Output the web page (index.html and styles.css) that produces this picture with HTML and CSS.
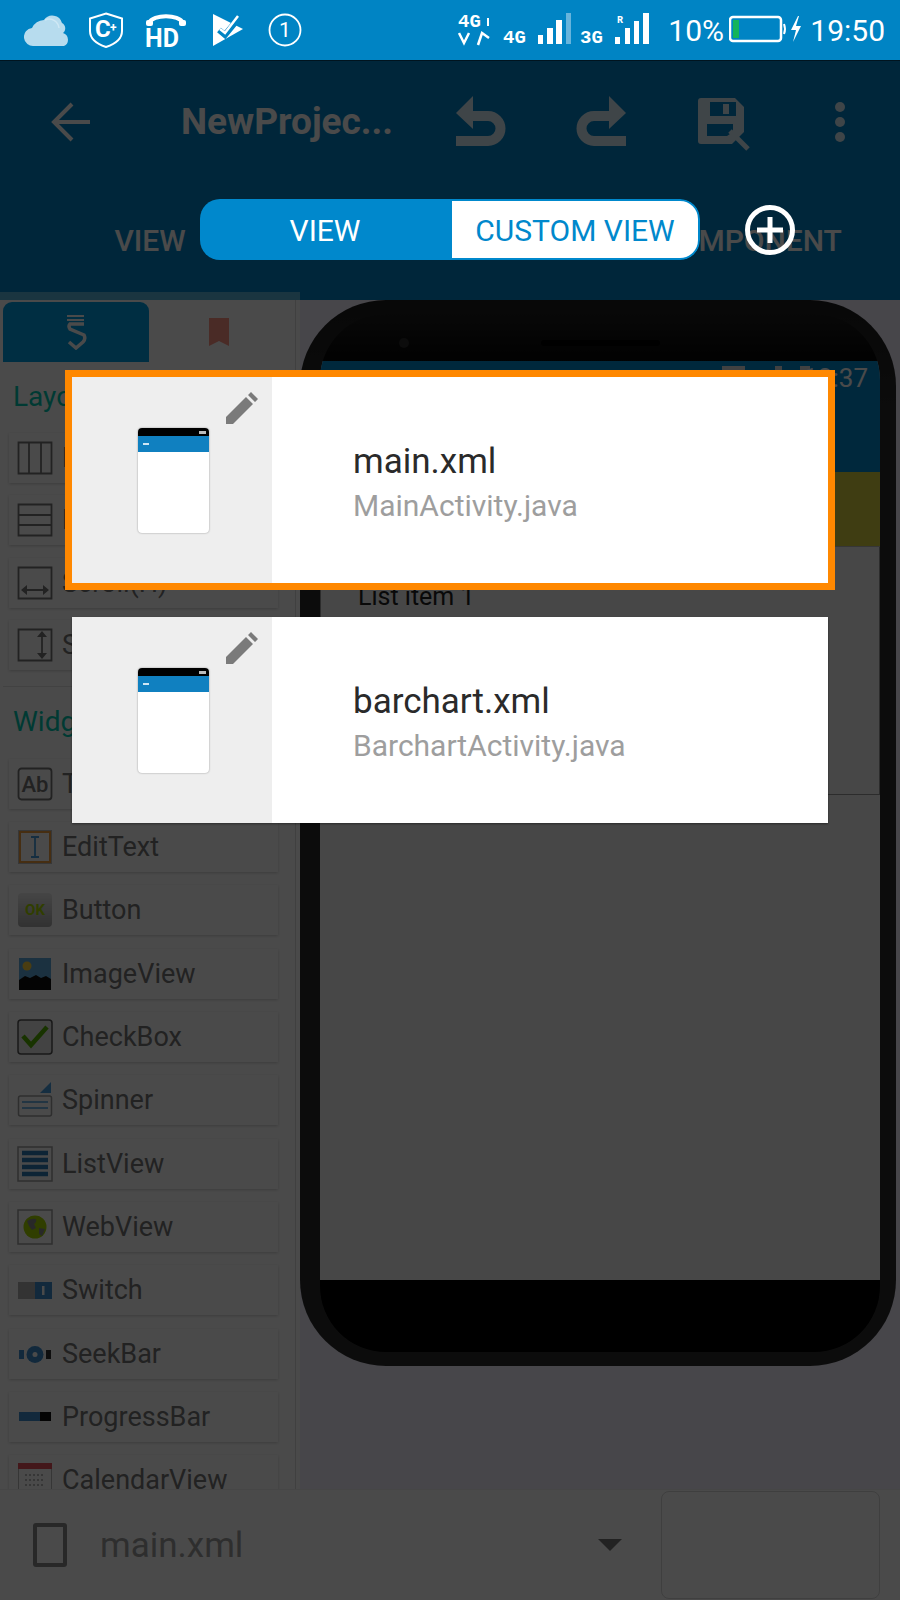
FILE: index.html
```html
<!DOCTYPE html>
<html lang="en">
<head>
  <meta charset="UTF-8">
  <title>NewProject</title>
  <meta name="viewport" content="width=device-width, initial-scale=1">
  <link rel="stylesheet" href="styles.css">
</head>
<body>
  <div class="statusbar">
    <svg class="st-cloud" width="44" height="38" viewBox="0 0 44 38"><path d="M10 36a9 9 0 0 1-2-18 14 14 0 0 1 12-8 10 10 0 0 1 18 3 6 6 0 0 1 1 10 7 7 0 0 1 1 13z" fill="#b7dcee"/><path d="M21 10a10 10 0 0 1 14 8" fill="none" stroke="#cfe8f4" stroke-width="1.5"/></svg>
    <svg class="st-shield" width="36" height="36" viewBox="0 0 36 36"><path d="M18 1.500 34 6.500V19C34 27 27 32 18 35 9 32 2 27 2 19V6.500z" fill="none" stroke="#fff" stroke-width="2"/><text x="7" y="24.500" class="st-c">C</text><text x="22" y="20" class="st-plus">+</text></svg>
    <svg class="st-hd" width="42" height="46" viewBox="0 -4 42 46"><path d="M4 12C8 3 34 3 38 12" fill="none" stroke="#fff" stroke-width="4"/><rect x="1" y="9" width="7" height="6" rx="2" fill="#fff"/><rect x="34" y="9" width="7" height="6" rx="2" fill="#fff"/><text x="0" y="36" class="st-hd-text">HD</text></svg>
    <svg class="st-flag" width="32" height="34" viewBox="0 0 32 34"><path d="M1 1 31 16 1 33z" fill="#fff"/><path d="M7 17l6 5 13-16" fill="none" stroke="#0084c4" stroke-width="6"/><path d="M8 16l5 4 13-17" fill="none" stroke="#fff" stroke-width="2.500"/></svg>
    <svg class="st-one" width="34" height="34" viewBox="0 0 34 34"><circle cx="17" cy="17" r="15.500" fill="none" stroke="#fff" stroke-width="1.800"/><text x="17" y="24" class="st-one-text">1</text></svg>

    <div class="st-right">
      <svg class="st-net" width="192" height="60" viewBox="458 0 192 60">
        <text x="458" y="27" class="net-big">4G</text>
        <rect x="487" y="18" width="2" height="8" fill="#fff"/>
        <path d="M459 33l5 10 5-10M478 45l4-12 7 5" fill="none" stroke="#fff" stroke-width="2.500"/>
        <text x="503" y="43" class="net-big">4G</text>
        <rect x="538" y="35" width="5" height="9" fill="#fff"/>
        <rect x="547" y="28" width="6" height="16" fill="#fff"/>
        <rect x="556" y="20" width="6" height="24" fill="#fff"/>
        <rect x="566" y="13" width="5" height="31" fill="#67b4dc"/>
        <text x="580" y="43" class="net-big">3G</text>
        <text x="617" y="23" class="net-small">R</text>
        <rect x="615" y="37" width="5" height="7" fill="#fff"/>
        <rect x="625" y="28" width="5" height="16" fill="#fff"/>
        <rect x="634" y="21" width="5" height="23" fill="#fff"/>
        <rect x="643" y="13" width="6" height="31" fill="#fff"/>
      </svg>
      <span class="st-pct">10%</span>
      <svg class="st-batt" width="74" height="30" viewBox="0 0 74 30"><rect x="1" y="2" width="51" height="24" rx="3" fill="none" stroke="#fff" stroke-width="2.500"/><rect x="4" y="5" width="6" height="18" fill="#14b45a"/><path d="M55 9q2 5 0 10" fill="none" stroke="#fff" stroke-width="2"/><path d="M69 1 62 15h5l-3 12 8-16h-5l3-10z" fill="#fff"/></svg>
      <span class="st-time">19:50</span>
    </div>
  </div>

  <div class="app">
    <header class="toolbar">
      <svg class="tb-back" width="42" height="42" viewBox="0 0 42 42"><path d="M40 21H4M22 3 4 21l18 18" fill="none" stroke="#fff" stroke-width="4"/></svg>
      <div class="tb-title">NewProjec...</div>
      <svg class="tb-undo tb-soft" width="50" height="50" viewBox="0 0 50 50"><path d="M0 45h32a12 12 0 0 0 0-25H10" fill="none" stroke="#fff" stroke-width="10"/><path d="M17 0 0 17l17 16z" fill="#fff"/></svg>
      <svg class="tb-redo tb-soft" width="50" height="50" viewBox="0 0 50 50"><path d="M50 45H18a12 12 0 0 1 0-25h22" fill="none" stroke="#fff" stroke-width="10"/><path d="M33 0l17 17-17 16z" fill="#fff"/></svg>
      <svg class="tb-save tb-soft" width="54" height="54" viewBox="0 0 54 54"><path d="M3 0h34l9 9v25l-6 6-6 6H3a3 3 0 0 1-3-3V3a3 3 0 0 1 3-3z" fill="#fff"/><rect x="12" y="4" width="26" height="14" class="save-slot"/><rect x="25" y="6" width="6" height="10" fill="#fff"/><path d="M9 26h26v8l-6 4H9z" class="save-slot"/><path d="M32 33l18 18" stroke="#fff" stroke-width="5"/></svg>
      <svg class="tb-more tb-soft" width="12" height="42" viewBox="0 0 12 42"><circle cx="6" cy="6" r="5" fill="#fff"/><circle cx="6" cy="21" r="5" fill="#fff"/><circle cx="6" cy="36" r="5" fill="#fff"/></svg>
    </header>

    <nav class="tabs">
      <div class="tab">VIEW</div>
      <div class="tab"></div>
      <div class="tab">COMPONENT</div>
      <div class="tab-indicator"></div>
    </nav>

    <main class="workspace">
      <aside class="palette">
        <div class="palette-tabs">
          <div class="ptab ptab-on">
            <svg width="24" height="36" viewBox="0 0 24 36"><path d="M3 2h17M3 6h17" stroke="#fff" stroke-width="2"/><path d="M20 10H6q-2 2 0 5l14 6q2 4-1 7l-7 6-7-6M5 28" fill="none" stroke="#fff" stroke-width="3.500"/></svg>
          </div>
          <div class="ptab ptab-marks">
            <svg width="20" height="28" viewBox="0 0 20 28"><path d="M0 0h20v28l-10-5-10 5z" fill="#ff9384"/></svg>
          </div>
        </div>

        <h3 class="group-title">Layout</h3>
        <div class="row row-tight">
          <svg class="ic" viewBox="0 0 36 36"><path d="M1.500 2.500h33v31h-33zM12 2.500v31M24 2.500v31" fill="none" stroke="#757575" stroke-width="1.800"/></svg>
          <span>LinearLayout(H)</span>
        </div>
        <div class="row row-tight">
          <svg class="ic" viewBox="0 0 36 36"><path d="M1.500 2.500h33v31h-33zM1.500 13h33M1.500 23h33" fill="none" stroke="#757575" stroke-width="1.800"/></svg>
          <span>LinearLayout(V)</span>
        </div>
        <div class="row row-tight">
          <svg class="ic" viewBox="0 0 36 36"><path d="M1.500 2.500h33v31h-33zM6 25h24" fill="none" stroke="#757575" stroke-width="1.800"/><path d="M10 20 4 25l6 5zM26 20l6 5-6 5z" fill="#757575"/></svg>
          <span>Scroll(H)</span>
        </div>
        <div class="row row-tight">
          <svg class="ic" viewBox="0 0 36 36"><path d="M1.500 2.500h33v31h-33zM25 7v22" fill="none" stroke="#757575" stroke-width="1.800"/><path d="M20 10l5-6 5 6zM20 26l5 6 5-6z" fill="#757575"/></svg>
          <span>Scroll(V)</span>
        </div>

        <div class="group-line"></div>
        <h3 class="group-title group-title-widgets">Widgets</h3>
        <div class="row">
          <svg class="ic" viewBox="0 0 36 36"><rect x="1.500" y="2.500" width="33" height="31" rx="3" fill="none" stroke="#757575" stroke-width="1.800"/><text x="18" y="26" class="ic-ab">Ab</text></svg>
          <span>TextView</span>
        </div>
        <div class="row">
          <svg class="ic" viewBox="0 0 36 36"><rect x="1" y="1" width="34" height="34" fill="#bdbdbd"/><rect x="3" y="3" width="30" height="30" fill="#fff" stroke="#f0a040" stroke-width="2"/><path d="M14 8h8M14 28h8M18 8v20" fill="none" stroke="#4a9fe0" stroke-width="1.800"/></svg>
          <span>EditText</span>
        </div>
        <div class="row">
          <svg class="ic" viewBox="0 0 36 36"><defs><linearGradient id="btn" x1="0" y1="0" x2="0" y2="1"><stop offset="0" stop-color="#eee"/><stop offset="1" stop-color="#aaa"/></linearGradient></defs><rect x="1" y="1" width="34" height="34" rx="4" fill="url(#btn)"/><text x="18" y="23" class="ic-ok">OK</text></svg>
          <span>Button</span>
        </div>
        <div class="row">
          <svg class="ic" viewBox="0 0 36 36"><rect x="2" y="2" width="32" height="32" fill="#5eaadd"/><circle cx="10" cy="10" r="4.500" fill="#ffd23c"/><path d="M2 24l6-4 5 2 6-3 5 3 5-2 5 3v11H2z" fill="#111"/></svg>
          <span>ImageView</span>
        </div>
        <div class="row">
          <svg class="ic" viewBox="0 0 36 36"><rect x="1" y="1" width="34" height="34" rx="3" fill="#e6e6e6" stroke="#555" stroke-width="1.500"/><path d="M6 17l8 9L30 8" fill="none" stroke="#55b000" stroke-width="4.500"/></svg>
          <span>CheckBox</span>
        </div>
        <div class="row">
          <svg class="ic" viewBox="0 0 36 36"><path d="M34 0v11H23z" fill="#4a9fe0"/><rect x="1.500" y="14" width="33" height="20" rx="2" fill="#fff" stroke="#9e9e9e" stroke-width="1.500"/><path d="M5 20h26M5 26h26" stroke="#4a9fe0" stroke-width="1.500"/></svg>
          <span>Spinner</span>
        </div>
        <div class="row">
          <svg class="ic" viewBox="0 0 36 36"><rect x="1" y="1" width="34" height="34" fill="#fff" stroke="#9e9e9e" stroke-width="1.500"/><path d="M5 7h26M5 14h26M5 21h26M5 28h26" stroke="#2e7cb8" stroke-width="4.500"/></svg>
          <span>ListView</span>
        </div>
        <div class="row">
          <svg class="ic" viewBox="0 0 36 36"><rect x="1" y="1" width="34" height="34" fill="#fff" stroke="#9e9e9e" stroke-width="1.500"/><circle cx="18" cy="18" r="11.500" fill="#a4d400"/><path d="M10 12q5-3 9-2 1 3-2 5l2 4-4 2-3-4zM22 19l6 1-3 7-3-2z" fill="#8a8a8a"/></svg>
          <span>WebView</span>
        </div>
        <div class="row">
          <svg class="ic" viewBox="0 0 36 36"><rect x="1" y="10" width="18" height="17" fill="#b0b0b0"/><rect x="18" y="10" width="17" height="17" fill="#3e8fd0"/><rect x="25" y="14" width="2.500" height="9" fill="#fff"/></svg>
          <span>Switch</span>
        </div>
        <div class="row">
          <svg class="ic" viewBox="0 0 36 36"><rect x="2" y="14" width="5" height="9" fill="#3e8fd0"/><rect x="29" y="14" width="5" height="9" fill="#333"/><circle cx="18" cy="18.500" r="8.500" fill="#3e8fd0"/><circle cx="18" cy="18.500" r="2.500" fill="#fff"/></svg>
          <span>SeekBar</span>
        </div>
        <div class="row">
          <svg class="ic" viewBox="0 0 36 36"><rect x="2" y="13" width="21" height="9" fill="#3e8fd0"/><rect x="23" y="13" width="11" height="9" fill="#111"/></svg>
          <span>ProgressBar</span>
        </div>
        <div class="row">
          <svg class="ic" viewBox="0 0 36 36"><rect x="1.500" y="1.500" width="33" height="33" fill="#fff" stroke="#bbb"/><rect x="1" y="1" width="34" height="6" fill="#e8505a"/><path d="M8 13h20M8 18h20M8 23h20M8 28h20" stroke="#bbb" stroke-width="2" stroke-dasharray="2 2"/></svg>
          <span>CalendarView</span>
        </div>
      </aside>

      <section class="canvas">
        <div class="phone">
          <div class="phone-face">
            <div class="phone-top">
              <span class="camera"></span>
              <span class="earpiece"></span>
            </div>
            <div class="screen">
              <div class="scr-header">
                <div class="scr-status">
                  <span class="scr-ic scr-ic-wide"></span>
                  <span class="scr-ic"></span>
                  <span class="scr-ic scr-ic-mid"></span>
                  <span class="scr-time">12:37</span>
                </div>
              </div>
              <div class="scr-band"></div>
              <div class="scr-list">List item 1</div>
            </div>
          </div>
        </div>
      </section>
    </main>

    <footer class="bottombar">
      <span class="device-ic"></span>
      <span class="file-name">main.xml</span>
      <span class="file-arrow"></span>
      <div class="run-box"></div>
    </footer>
  </div>

  <div class="scrim"></div>

  <div class="segmented">
    <div class="seg seg-on">VIEW</div>
    <div class="seg seg-off">CUSTOM VIEW</div>
  </div>
  <svg class="add-btn" width="50" height="50" viewBox="0 0 50 50"><circle cx="25" cy="25" r="22.500" fill="none" stroke="#fff" stroke-width="5"/><path d="M25 12v26M12 25h26" stroke="#fff" stroke-width="5"/></svg>

  <div class="file-dialog">
    <div class="file-card file-card-on">
      <div class="thumb">
        <svg class="pencil" width="32" height="32" viewBox="0 0 32 32"><path d="M0 32v-7L20 5l7 7L7 32zM22 3l3-3 7 7-3 3z" fill="#7a7a7a"/></svg>
        <div class="mini"><div class="mini-status"><i></i></div><div class="mini-head"><i></i></div></div>
      </div>
      <div class="file-text">
        <div class="file-title">main.xml</div>
        <div class="file-sub">MainActivity.java</div>
      </div>
    </div>
    <div class="file-card">
      <div class="thumb">
        <svg class="pencil" width="32" height="32" viewBox="0 0 32 32"><path d="M0 32v-7L20 5l7 7L7 32zM22 3l3-3 7 7-3 3z" fill="#7a7a7a"/></svg>
        <div class="mini"><div class="mini-status"><i></i></div><div class="mini-head"><i></i></div></div>
      </div>
      <div class="file-text">
        <div class="file-title">barchart.xml</div>
        <div class="file-sub">BarchartActivity.java</div>
      </div>
    </div>
  </div>
</body>
</html>
```

FILE: styles.css
```css
* {
  box-sizing: border-box;
}
body {
  margin: 0;
  width: 900px;
  height: 1600px;
  overflow: hidden;
  position: relative;
  font-family: Roboto, 'Liberation Sans', sans-serif;
  background: #fff;
}
svg {
  display: block;
  flex: none;
}

/* status bar stays above the scrim */
.statusbar {
  position: relative;
  z-index: 3;
  height: 61px;
  background: #0084c4;
  border-bottom: 1px solid #00141f;
  display: flex;
  align-items: center;
  padding-left: 24px;
  color: #fff;
}
.st-cloud { margin-right: 20px; margin-top: -2px; }
.st-shield { margin-right: 21px; }
.st-hd { margin-right: 25px; }
.st-flag { margin-right: 24px; }
.st-c { font: 700 24px Roboto, sans-serif; fill: #fff; }
.st-plus { font: 700 12px Roboto, sans-serif; fill: #fff; }
.st-hd-text { font: 700 25px Roboto, sans-serif; fill: #fff; }
.st-one-text { font: 400 21px Roboto, sans-serif; fill: #fff; text-anchor: middle; }
.st-right {
  margin-left: auto;
  display: flex;
  align-items: center;
  padding-right: 15px;
}
.st-net { margin-right: 18px; }
.net-big { font: 700 19px 'Liberation Mono', monospace; fill: #fff; }
.net-small { font: 700 10px 'Liberation Mono', monospace; fill: #fff; }
.st-pct { font-size: 30px; width: 61px; }
.st-time { font-size: 30px; margin-left: 7px; }

/* toolbar and tabs */
.toolbar {
  height: 131px;
  padding-bottom: 10px;
  background: #0084c8;
  display: flex;
  align-items: center;
  color: #fff;
}
.tb-back { margin-left: 50px; }
.tb-title {
  margin-left: 89px;
  width: 274px;
  font-size: 37px;
  font-weight: 700;
}
.tb-soft { opacity: .85; }
.tb-undo { margin-left: 1px; margin-top: -1px; }
.tb-redo { margin-left: 70px; margin-top: -1px; }
.tb-save { margin-left: 72px; margin-top: 7px; }
.tb-more { margin-left: 82px; }
.save-slot { fill: #0084c8; }
.tabs {
  position: relative;
  height: 108px;
  background: #0084c8;
  display: grid;
  grid-template-columns: 300px 300px 300px;
  color: #fff;
  font-size: 30px;
  font-weight: 500;
  text-align: center;
  padding-top: 31px;
}
.tab-indicator {
  position: absolute;
  left: 0;
  bottom: 0;
  width: 300px;
  height: 8px;
  background: #5ab7dc;
}

/* palette on the left */
.workspace {
  display: flex;
  height: 1189px;
  background: #fff;
}
.palette {
  width: 296px;
  border-right: 1px solid #dcdcdc;
  overflow: hidden;
  flex: none;
  margin-right: 4px;
}
.palette-tabs {
  display: flex;
  padding: 2px 0 0 3px;
  gap: 2px;
}
.ptab {
  width: 146px;
  height: 60px;
  display: flex;
  align-items: center;
  justify-content: center;
  border-radius: 9px 9px 0 0;
}
.ptab-on {
  background: #00a0e4;
}
.ptab-marks {
  width: 136px;
}
.group-title {
  margin: 15px 0 16px 13px;
  height: 40px;
  line-height: 40px;
  font-size: 28px;
  font-weight: 400;
  color: #00c8b0;
}
.group-title-widgets {
  margin-bottom: 17px;
}
.group-line {
  height: 1px;
  background: #e4e4e4;
  margin: 16px 0 0 3px;
}
.row {
  margin: 0 17px 13.3px 9px;
  height: 50px;
  background: #fff;
  box-shadow: 0 1px 3px rgba(0,0,0,.2);
  display: flex;
  align-items: center;
  padding-left: 8px;
  gap: 9px;
  font-size: 27px;
  color: #757575;
  white-space: nowrap;
}
.row-tight {
  margin-bottom: 12.3px;
}
.ic {
  width: 36px;
  height: 36px;
}
.ic-ab { font: 500 22px Roboto, sans-serif; fill: #757575; text-anchor: middle; }
.ic-ok { font: 700 15px Roboto, sans-serif; fill: #a4d400; text-anchor: middle; }

/* phone preview */
.canvas {
  flex: 1;
  background: #f3f0ff;
}
.phone {
  width: 596px;
  height: 1066px;
  padding: 14px 16px 14px 20px;
  background: linear-gradient(#1c1c1c, #2c2c2c 12%);
  border-radius: 86px;
}
.phone-face {
  height: 100%;
  background: linear-gradient(#1c1c1c, #000 60px);
  border-radius: 66px;
  overflow: hidden;
}
.phone-top {
  height: 47px;
  position: relative;
}
.camera {
  position: absolute;
  left: 79px;
  top: 24px;
  width: 10px;
  height: 10px;
  border-radius: 50%;
  background: #2a2a2a;
}
.earpiece {
  position: absolute;
  left: 221px;
  top: 26px;
  width: 119px;
  height: 6px;
  border-radius: 3px;
  background: #000;
}
.screen {
  height: 919px;
  background: #f4f4f4;
}
.scr-header {
  height: 111px;
  background: #008bd0;
}
.scr-status {
  display: flex;
  justify-content: flex-end;
  align-items: center;
  height: 34px;
  padding-right: 12px;
  color: #fff;
  font-size: 26px;
}
.scr-ic {
  align-self: flex-start;
  margin-top: 5px;
  width: 7px;
  height: 14px;
  margin-right: 18px;
  background: #e0e0e0;
}
.scr-ic-wide { width: 23px; margin-right: 30px; }
.scr-ic-mid { width: 10px; margin-right: -7px; }
.scr-band {
  height: 75px;
  background: #dad23e;
  border-bottom: 1px solid #bbb;
}
.scr-list {
  height: 248px;
  background: #f4f4f4;
  border: 1px solid #999;
  border-top: 0;
  padding: 35px 0 0 37px;
  font-size: 25px;
  color: #222;
}

/* bottom bar */
.bottombar {
  height: 111px;
  background: #fff;
  border-top: 1px solid #f0f0f0;
  display: flex;
  align-items: center;
  color: #8a8a8a;
}
.device-ic {
  margin-left: 33px;
  width: 34px;
  height: 44px;
  border: 4px solid #8a8a8a;
  border-radius: 3px;
}
.file-name {
  margin-left: 33px;
  font-size: 35px;
  color: #a0a0a0;
}
.file-arrow {
  margin-left: 355px;
  width: 0;
  height: 0;
  border-left: 12.500px solid transparent;
  border-right: 12.500px solid transparent;
  border-top: 12px solid #757575;
}
.run-box {
  margin-left: 39px;
  width: 219px;
  height: 108px;
  border: 1.500px solid #d8d8d8;
  border-radius: 8px;
}

/* dim layer and what sits over it */
.scrim {
  position: absolute;
  inset: 0;
  z-index: 1;
  background: rgba(0,0,0,.71);
}
.segmented {
  position: absolute;
  z-index: 2;
  left: 200px;
  top: 199px;
  width: 500px;
  height: 61px;
  display: flex;
  border-radius: 20px;
  overflow: hidden;
  font-size: 30px;
  text-align: center;
  line-height: 64px;
}
.seg-on {
  width: 250px;
  background: #0088cc;
  color: #fff;
}
.seg-off {
  flex: 1;
  background: #fff;
  color: #0088cc;
  border: 2px solid #0088cc;
  border-radius: 0 20px 20px 0;
  line-height: 60px;
}
.add-btn {
  position: absolute;
  z-index: 2;
  left: 745px;
  top: 205px;
}

.file-dialog {
  position: absolute;
  z-index: 2;
  left: 72px;
  top: 377px;
  width: 756px;
  display: flex;
  flex-direction: column;
  gap: 34px;
}
.file-card {
  height: 206px;
  background: #fff;
  display: flex;
  box-shadow: 0 1px 2px rgba(0,0,0,.4);
}
.file-card-on {
  outline: 7px solid #ff8800;
}
.thumb {
  position: relative;
  width: 200px;
  background: #eee;
  display: flex;
  align-items: center;
  justify-content: center;
}
.pencil {
  position: absolute;
  left: 154px;
  top: 15px;
}
.mini {
  width: 71px;
  height: 105px;
  margin-left: 2px;
  background: #fff;
  border-radius: 4px;
  overflow: hidden;
  box-shadow: 0 0 2px rgba(0,0,0,.4);
}
.mini-status {
  height: 8px;
  background: #000;
  position: relative;
}
.mini-status i {
  position: absolute;
  right: 3px;
  top: 3px;
  width: 7px;
  height: 3px;
  background: #bbb;
}
.mini-head {
  height: 16px;
  background: #1080c0;
  position: relative;
}
.mini-head i {
  position: absolute;
  left: 5px;
  top: 7px;
  width: 6px;
  height: 2px;
  background: #cfe6f4;
}
.file-text {
  padding: 65px 0 0 81px;
}
.file-title {
  font-size: 35px;
  line-height: 40px;
  color: #2a2a2a;
}
.file-sub {
  font-size: 30px;
  line-height: 36px;
  color: #9e9e9e;
  margin-top: 6px;
}
```
